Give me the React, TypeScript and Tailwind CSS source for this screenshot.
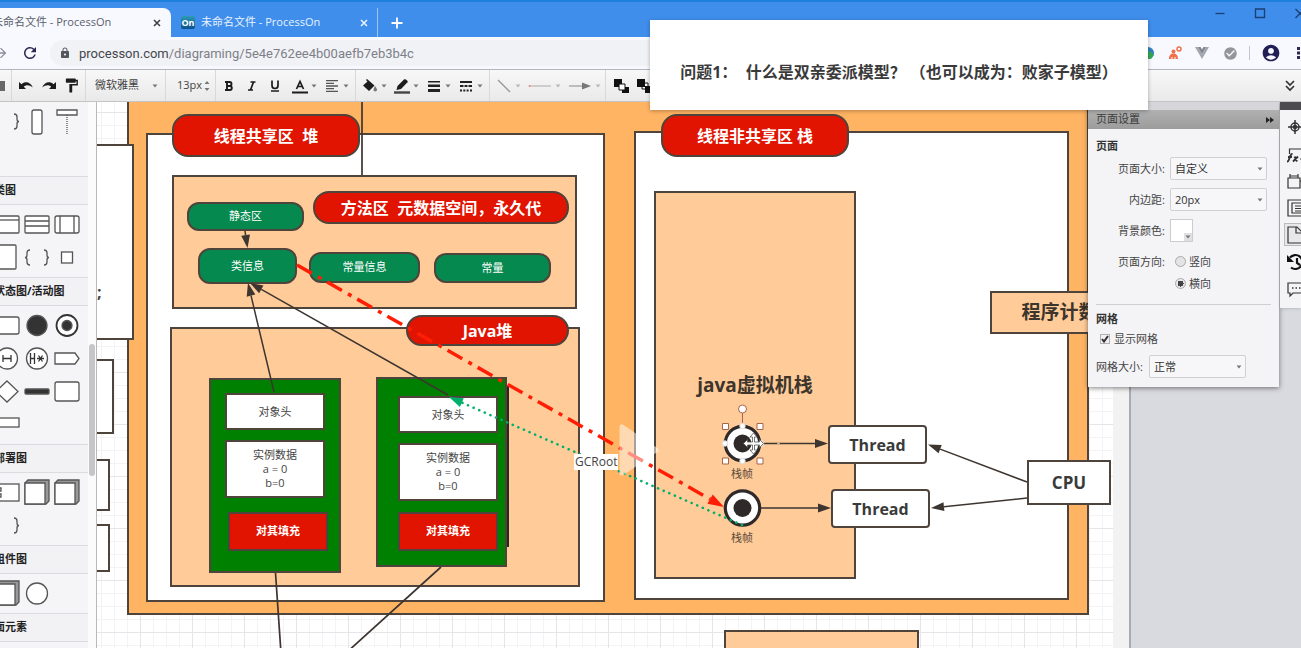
import React from "react";
import {
  MdRefresh, MdLock, MdAccountCircle, MdCheckCircle, MdFormatPaint,
  MdFormatAlignLeft, MdArrowForward,
} from "react-icons/md";

const INK = "#3d3530";
const FONT = "font-['Open_Sans','Noto_Sans_CJK_SC',sans-serif]";

/* ---------- browser chrome ---------- */

function Cross({ className }: { className: string }) {
  return (
    <svg viewBox="0 0 8 8" className={className} fill="none" stroke="currentColor" strokeWidth="1.6">
      <path d="M1 1l6 6M7 1L1 7" />
    </svg>
  );
}

function TabStrip() {
  return (
    <div className="flex h-[37px] shrink-0 items-end border-t-2 border-[#1c80dc] bg-[#3f8eec] text-[11px]">
      <div className="flex h-[29px] w-[171px] items-center justify-between rounded-tr-lg bg-[#f8f9fe] pr-[10px] text-[#5a5e6c]">
        <span className="-ml-[8px] whitespace-nowrap">未命名文件 - ProcessOn</span>
        <button aria-label="关闭标签页"><Cross className="size-2 text-[#3c4048]" /></button>
      </div>
      <div className="flex h-[29px] w-[207px] items-center gap-[6px] border-r border-[#9cc4f5] pl-[10px] pr-[9px] text-[#e8f2ff]">
        <span className="flex h-[13px] w-[14px] items-center justify-center rounded-xs bg-linear-to-b from-[#2f9bb4] to-[#0d4f8c] text-[9px] font-bold leading-none text-white">On</span>
        <span className="flex-1 whitespace-nowrap">未命名文件 - ProcessOn</span>
        <button aria-label="关闭标签页"><Cross className="size-2" /></button>
      </div>
      <button aria-label="新标签页" className="flex h-[29px] w-[38px] items-center justify-center text-white">
        <svg viewBox="0 0 12 12" className="size-3" stroke="currentColor" strokeWidth="1.8"><path d="M6 0.5v11M0.5 6h11" /></svg>
      </button>
      <div className="-mr-[5px] ml-auto flex gap-[28px] self-start pt-[5px] text-[#1d3f70]">
        <button aria-label="最小化">
          <svg viewBox="0 0 12 12" className="size-3" fill="none" stroke="currentColor" strokeWidth="1.3"><path d="M1.500 6.500h9" /></svg>
        </button>
        <button aria-label="最大化">
          <svg viewBox="0 0 12 12" className="size-3" fill="none" stroke="currentColor" strokeWidth="1.3"><path d="M1.500 2h9v8.500h-9z" /></svg>
        </button>
        <button aria-label="关闭">
          <svg viewBox="0 0 12 12" className="size-3" fill="none" stroke="currentColor" strokeWidth="1.3"><path d="M1.500 2l9 9M10.500 2l-9 9" /></svg>
        </button>
      </div>
    </div>
  );
}

function AddressBar() {
  return (
    <div className="flex h-8 shrink-0 items-center bg-[#f8f9fe]">
      <button aria-label="前进" className="-ml-[7px] text-[#8b8d9c]"><MdArrowForward className="size-4" /></button>
      <button aria-label="重新加载" className="ml-[12px] text-[#2b2a55]"><MdRefresh className="size-[18px]" /></button>
      <div className="ml-[11px] flex h-[26px] flex-1 items-center gap-[8px] rounded-full bg-[#f1f2f6] pl-[9px]">
        <MdLock className="size-3 text-[#55575e]" />
        <p className="font-[Roboto,sans-serif] text-[13px] leading-none text-[#7d8088]">
          <span className="text-[#44464c]">processon.com</span>/diagraming/5e4e762ee4b00aefb7eb3b4c
        </p>
      </div>
      <div className="-mr-[5px] flex items-center">
        <svg viewBox="0 0 14 14" className="mr-[13px] size-[14px]">
          <circle cx="7" cy="7" r="6" fill="#2f7fc4" /><path d="M7 4l6 5-3 4H7z" fill="#35a853" />
        </svg>
        <svg viewBox="0 0 14 14" className="mr-[13px] size-[14px]">
          <circle cx="5.500" cy="5.500" r="2" fill="#f0714a" />
          <path d="M1 13c0-4 2-5.500 4.500-5.500S10 9 10 13H7.500v-2h-1v2h-2v-2h-1v2z" fill="#f0714a" />
          <circle cx="11" cy="3" r="2" fill="none" stroke="#f0714a" strokeWidth="1.500" />
        </svg>
        <svg viewBox="0 0 14 12" className="mr-[14px] h-3 w-[14px]">
          <path d="M0 0h3l4 7 4-7h3L7 12z" fill="#a3a6ad" /><path d="M3 0h2.500L7 2.600 8.500 0H11L7 7z" fill="#7f838b" />
        </svg>
        <MdCheckCircle className="size-[15px] text-[#93969c]" />
        <span className="mx-[11px] h-[14px] w-px bg-[#c3c6d0]" />
        <button aria-label="账户"><MdAccountCircle className="size-[20px] text-[#211f56]" /></button>
        <button aria-label="菜单" className="ml-[11px]">
          <svg viewBox="0 0 14 14" className="size-[14px]" fill="#2b2a55"><path d="M5 1h3v3H5zM5 5.500h3v3H5zM5 10h3v3H5z" /></svg>
        </button>
      </div>
    </div>
  );
}

/* ---------- toolbar ---------- */

function Caret({ faint = false }: { faint?: boolean }) {
  return (
    <svg viewBox="0 0 6 4" className={faint ? "h-1 w-[6px] shrink-0 text-[#b8b8b8]" : "h-1 w-[6px] shrink-0 text-[#777]"}>
      <path d="M0.500 0.500h5L3 3.500z" fill="currentColor" />
    </svg>
  );
}

function Divider() {
  return <span className="h-8 w-px shrink-0 bg-[#d9d9d9]" />;
}

function Tool({ label, children }: { label: string; children: React.ReactNode }) {
  return (
    <button aria-label={label} className="flex h-6 w-[23px] shrink-0 items-center justify-center">{children}</button>
  );
}

function DropTool({ label, children, faint }: { label: string; children: React.ReactNode; faint?: boolean }) {
  return (
    <button aria-label={label} className="flex h-6 shrink-0 items-center gap-[3px] pl-[6px] pr-px">
      {children}
      <Caret faint={faint} />
    </button>
  );
}

function Toolbar() {
  return (
    <div className="flex h-[33px] shrink-0 items-center overflow-hidden border-y border-b-[#c4c4c4] border-t-[#b5b6bd] bg-linear-to-b from-[#f8f8f8] to-[#e9e9e9] text-[#1c1c1c]">
      <span className="mr-[6px] h-[10px] w-[5px] shrink-0 bg-[#666]" />
      <Divider />
      <div className="flex pl-[2px] pr-[2px]">
        <Tool label="撤销"><svg viewBox="0 0 14 9" className="h-[9px] w-[14px]"><path d="M0 1v7h7L4.800 5.800C7 3.500 10.500 3.800 13.800 6.500 12 1.500 6.500-.5 2.500 3.200z" fill="currentColor" /></svg></Tool>
        <Tool label="恢复"><svg viewBox="0 0 14 9" className="h-[9px] w-[14px]"><path d="M14 1v7H7l2.200-2.200C7 3.500 3.500 3.800.2 6.500 2 1.500 7.500-.5 11.500 3.200z" fill="currentColor" /></svg></Tool>
        <Tool label="格式刷"><MdFormatPaint className="size-[17px]" /></Tool>
      </div>
      <Divider />
      <label className="flex items-center gap-[12px] pl-[9px] pr-[7px]">
        <select aria-label="字体" className="w-[45px] appearance-none bg-transparent text-[11px] text-[#444] outline-none"><option>微软雅黑</option></select>
        <Caret />
      </label>
      <Divider />
      <label className="flex items-center pl-[11px] pr-[5px]">
        <input aria-label="字号" defaultValue="13px" className="w-[27px] bg-transparent text-[11px] text-[#444] outline-none" />
        <svg viewBox="0 0 6 12" className="h-3 w-[6px]" fill="#777"><path d="M.5 4L3 1l2.500 3zM.5 8h5L3 11z" /></svg>
      </label>
      <Divider />
      <div className="flex pl-px">
        <Tool label="粗体"><svg viewBox="0 0 10 10" className="size-[10px]"><path d="M1 1h4.500a2 2 0 0 1 0 4H3 5.800a2 2 0 0 1 0 4H1M3 .5v9" fill="none" stroke="currentColor" strokeWidth="1.900" /></svg></Tool>
        <Tool label="斜体"><svg viewBox="0 0 10 10" className="size-[10px]"><path d="M3.500 1h5M1 9h5M6.500 1l-3 8" fill="none" stroke="currentColor" strokeWidth="1.700" /></svg></Tool>
        <Tool label="下划线"><svg viewBox="0 0 10 12" className="h-3 w-[10px]"><path d="M2 .5v5a3 3 0 0 0 6 0v-5M1 11h8" fill="none" stroke="currentColor" strokeWidth="1.700" /></svg></Tool>
      </div>
      <DropTool label="字体颜色"><svg viewBox="0 0 16 16" className="size-4"><path d="M4.500 11L8 3.500 11.500 11M5.800 8.500h4.400" fill="none" stroke="currentColor" strokeWidth="1.700" /><path d="M0 13.500h16v2H0z" fill="currentColor" /></svg></DropTool>
      <DropTool label="对齐"><MdFormatAlignLeft className="size-4 text-[#555]" /></DropTool>
      <span className="w-[5px]" />
      <Divider />
      <DropTool label="填充"><svg viewBox="0 0 16 16" className="size-4"><path d="M5 1l7.500 6.500L7 13 1 7.500 5.500 3.500 4 2z" fill="currentColor" /><path d="M13 8c1 1.500 2 2.600 2 3.800s-.8 1.700-1.700 1.700-1.800-.6-1.800-1.700S12.500 9.500 13 8z" fill="#777" /></svg></DropTool>
      <DropTool label="线条颜色"><svg viewBox="0 0 16 16" className="size-4"><path d="M2.500 12l1-4L10 1.500c1-1 4.500 1.500 3.500 2.800L7 11z" fill="currentColor" /><path d="M0 13.300h16v2.400H0z" fill="#444" /></svg></DropTool>
      <DropTool label="线宽"><svg viewBox="0 0 16 12" className="h-3 w-4" fill="#222"><path d="M2 1h12v1.500H2zM2 4.500h12V7H2zM2 9h12v3H2z" /></svg></DropTool>
      <DropTool label="线型"><svg viewBox="0 0 16 12" className="h-3 w-4" fill="#222"><path d="M2 1h12v2H2zM2 5h3.500v2H2zM6.500 5h3v2h-3zM10.500 5H14v2h-3.500zM2 9.500h2v2H2zM5.300 9.500h2v2h-2zM8.600 9.500h2v2h-2zM12 9.500h2v2h-2z" /></svg></DropTool>
      <span className="w-[5px]" />
      <Divider />
      <DropTool label="连线类型" faint><svg viewBox="0 0 16 16" className="size-4" fill="none"><path d="M2 2l12 12" stroke="#999" strokeWidth="1.400" /></svg></DropTool>
      <DropTool label="起点" faint><svg viewBox="0 0 24 8" className="h-2 w-6"><path d="M1 4h22" stroke="#aaa" /><circle cx="1.500" cy="4" r="1" fill="#e88" /></svg></DropTool>
      <DropTool label="终点" faint><svg viewBox="0 0 24 8" className="h-2 w-6"><path d="M1 4h14" stroke="#888" /><path d="M14 .5L23 4l-9 3.500z" fill="#777" /></svg></DropTool>
      <span className="w-[3px]" />
      <Divider />
      <div className="flex pl-[4px]">
        <Tool label="置于顶层"><svg viewBox="0 0 15 14" className="h-[14px] w-[15px]"><path d="M0 0h8v8H0zM8 8h7v6H8z" fill="#111" /><path d="M5 5h6v6H5z" fill="#fff" stroke="#111" /></svg></Tool>
        <Tool label="置于底层"><svg viewBox="0 0 15 14" className="h-[14px] w-[15px]"><path d="M5 4h6v6H5z" fill="#fff" stroke="#111" /><path d="M0 0h8v8H0zM8 7h7v7H8z" fill="#111" /></svg></Tool>
      </div>
      <button aria-label="展开" className="ml-auto mr-[5px]">
        <svg viewBox="0 0 12 12" className="size-3" fill="none" stroke="#333" strokeWidth="1.700"><path d="M2 1l4 4 4-4M2 6l4 4 4-4" /></svg>
      </button>
    </div>
  );
}

/* ---------- shape library ---------- */

function Shape({ children }: { children?: React.ReactNode }) {
  return (
    <svg viewBox="0 0 30 33" className="h-[33px] w-[30px]" fill="#fff" stroke="#555" strokeWidth="1.300">{children}</svg>
  );
}

const brace = <g fill="none"><path d="M8 9q-3 0-3 3v2q0 2.500-2 2.500 2 0 2 2.500v2q0 3 3 3M22 9q3 0 3 3v2q0 2.500 2 2.500-2 0-2 2.500v2q0 3-3 3" /></g>;
const cube = <g><path d="M3 7l3-3h21v21l-3 3H3z" fill="#999" /><path d="M3 7h20v21H3z" /></g>;

function Title({ children }: { children: React.ReactNode }) {
  return (
    <h2 className="flex h-[29px] items-center whitespace-nowrap border-y border-[#dcdce0] bg-[#f2f2f5] text-[11px] font-bold text-[#222]">
      <span className="-ml-[6px]">{children}</span>
    </h2>
  );
}

function Shapes({ children, tail = false }: { children: React.ReactNode; tail?: boolean }) {
  return (
    <div className={tail ? "-ml-2 grid grid-cols-[30px_30px_30px] pb-[38px] pt-[3px]" : "-ml-2 grid grid-cols-[30px_30px_30px] py-[3px]"}>
      {children}
    </div>
  );
}

function Library() {
  return (
    <aside className="flex w-[97px] shrink-0 overflow-hidden border-r border-[#b9b9bd] bg-[#f5f5f8]">
      <div className="w-[88px] shrink-0 overflow-hidden">
        <Shapes tail>
          <Shape>{brace}</Shape>
          <Shape><rect x="10" y="5" width="10" height="24" rx="2" /></Shape>
          <Shape><path d="M5 5h20v5H5z" /><path d="M15 10v19" strokeDasharray="1 1" /></Shape>
        </Shapes>
        <Title>类图</Title>
        <Shapes>
          <Shape><rect x="2" y="8" width="25" height="17" rx="1" /><path d="M2 12h25" /></Shape>
          <Shape><rect x="3" y="8" width="24" height="17" rx="1" /><path d="M3 13h24M3 18h24" /></Shape>
          <Shape><rect x="3" y="8" width="24" height="17" rx="2" /><path d="M8 8v17M22 8v17" /></Shape>
          <Shape><rect x="2" y="4" width="22" height="24" rx="1" /></Shape>
          <Shape>{brace}</Shape>
          <Shape><rect x="9.500" y="11" width="11" height="11" /></Shape>
        </Shapes>
        <Title>状态图/活动图</Title>
        <Shapes>
          <Shape><rect x="2" y="8" width="25" height="17" rx="2" /></Shape>
          <Shape><circle cx="15" cy="16.500" r="10" fill="#333" /></Shape>
          <Shape><circle cx="15" cy="16.500" r="10.500" stroke="#333" strokeWidth="1.800" /><circle cx="15" cy="16.500" r="5" fill="#333" /></Shape>
          <Shape><circle cx="15" cy="16.500" r="10.500" /><path d="M11 13v7M19 13v7M11 16.500h8" stroke="#333" /></Shape>
          <Shape><circle cx="15" cy="16.500" r="10.500" /><path d="M8.500 11v11M12.500 11v11M8.500 16.500h4M15 16.500h7M16.500 13.500l4 6M20.500 13.500l-4 6" stroke="#333" /></Shape>
          <Shape><path d="M3 11h20l4 5.500-4 5.500H3z" /></Shape>
          <Shape><path d="M15 6l11 10.500L15 27 4 16.500z" /></Shape>
          <Shape><rect x="3" y="14" width="24" height="5" rx="1" fill="#333" /></Shape>
          <Shape><rect x="3" y="7" width="24" height="19" rx="2" /></Shape>
          <Shape><rect x="2" y="10" width="25" height="9" /></Shape>
        </Shapes>
        <Title>部署图</Title>
        <Shapes>
          <Shape><rect x="2" y="8" width="25" height="17" /><path d="M5 12h4v3H5zM5 18h4v3H5z" /></Shape>
          <Shape>{cube}</Shape>
          <Shape>{cube}</Shape>
          <Shape>{brace}</Shape>
        </Shapes>
        <Title>组件图</Title>
        <Shapes>
          <Shape>{cube}</Shape>
          <Shape><circle cx="15" cy="16.500" r="10.500" /></Shape>
        </Shapes>
        <Title>面元素</Title>
      </div>
      <div className="flex-1 bg-[#fbfbfc] pt-[242px]">
        <div className="ml-px h-[132px] w-[6px] rounded-full bg-[#c6c6c8]" />
      </div>
    </aside>
  );
}

/* ---------- diagram ---------- */

const SCROLL = { x: 97, y: 102 };

type Kind = "frame" | "area" | "white" | "red" | "green" | "object" | "fill" | "card" | "thread" | "cpu" | "note" | "shadow";
type NodeSpec = { kind: Kind; box: [number, number, number, number]; text?: string };

const KINDS: Record<Kind, string> = {
  frame: "border-2 bg-[#ffb464]",
  white: "border-2 bg-white",
  area: "border-2 bg-[#ffcc99] text-[19px] font-bold text-[#3d342c]",
  note: "border-2 bg-[#ffcc99] text-[19px] font-bold text-[#3d342c]",
  red: "rounded-2xl border-2 bg-[#e01400] text-base font-bold text-white",
  green: "rounded-xl border-2 bg-[#05894f] text-[11px] text-white",
  object: "border-2 bg-[#008000]",
  shadow: "bg-[#2c2620]",
  card: "border-2 bg-white text-[11px] leading-[14px] text-[#444]",
  fill: "border-2 bg-[#e01400] text-[11px] font-bold text-white",
  thread: "rounded-sm border-2 bg-white text-base font-bold text-[#3a3a3a]",
  cpu: "border-2 bg-white text-[17px] font-bold text-[#3a3a3a]",
};

/* box = left, top, right, bottom on the drawing */
const NODES: NodeSpec[] = [
  { kind: "frame", box: [127, 80, 1089, 615] },
  { kind: "white", box: [60, 144, 134, 340] },
  { kind: "white", box: [60, 359, 114, 434] },
  { kind: "white", box: [60, 459, 110, 511] },
  { kind: "white", box: [60, 524, 110, 572] },
  { kind: "white", box: [146, 133, 605, 602] },
  { kind: "white", box: [634, 131, 1069, 600] },
  { kind: "area", box: [172, 175, 577, 309] },
  { kind: "area", box: [170, 327, 580, 587] },
  { kind: "area", box: [654, 191, 856, 579], text: "java虚拟机栈" },
  { kind: "red", box: [172, 114, 360, 157], text: "线程共享区  堆" },
  { kind: "red", box: [661, 114, 849, 157], text: "线程非共享区 栈" },
  { kind: "red", box: [313, 191, 569, 224], text: "方法区  元数据空间，永久代" },
  { kind: "red", box: [406, 315, 569, 346], text: "Java堆" },
  { kind: "green", box: [187, 202, 304, 231], text: "静态区" },
  { kind: "green", box: [198, 248, 297, 284], text: "类信息" },
  { kind: "green", box: [309, 252, 420, 283], text: "常量信息" },
  { kind: "green", box: [434, 253, 551, 283], text: "常量" },
  { kind: "shadow", box: [505, 386, 509, 547] },
  { kind: "object", box: [209, 378, 341, 573] },
  { kind: "object", box: [376, 377, 507, 567] },
  { kind: "card", box: [225, 393, 325, 430], text: "对象头" },
  { kind: "card", box: [225, 440, 325, 498], text: "实例数据\na = 0\nb=0" },
  { kind: "fill", box: [228, 512, 328, 551], text: "对其填充" },
  { kind: "card", box: [398, 396, 498, 433], text: "对象头" },
  { kind: "card", box: [398, 443, 498, 501], text: "实例数据\na = 0\nb=0" },
  { kind: "fill", box: [398, 512, 498, 551], text: "对其填充" },
  { kind: "note", box: [990, 291, 1129, 334], text: "程序计数" },
  { kind: "note", box: [724, 630, 919, 700] },
  { kind: "thread", box: [828, 425, 927, 464], text: "Thread" },
  { kind: "thread", box: [831, 489, 930, 528], text: "Thread" },
  { kind: "cpu", box: [1027, 460, 1111, 505], text: "CPU" },
];

function DiagramNode({ kind, box: [l, t, r, b], text }: NodeSpec) {
  return (
    <div
      className={`absolute flex items-center justify-center whitespace-pre border-[#4e443c] text-center ${KINDS[kind]}`}
      style={{ left: l - SCROLL.x, top: t - SCROLL.y, width: r - l, height: b - t }}
    >
      {text}
    </div>
  );
}

type ArrowProps = { from: [number, number]; to: [number, number]; color?: string; width?: number; dash?: string; cap?: "round" | "butt"; head?: number };

function Arrow({ from, to, color = INK, width = 1.5, dash, cap = "butt", head = 13 }: ArrowProps) {
  const len = Math.hypot(to[0] - from[0], to[1] - from[1]);
  const ux = (to[0] - from[0]) / len;
  const uy = (to[1] - from[1]) / len;
  const bx = to[0] - ux * head;
  const by = to[1] - uy * head;
  const half = head * 0.34;
  return (
    <g>
      <line x1={from[0]} y1={from[1]} x2={bx} y2={by} stroke={color} strokeWidth={width} strokeDasharray={dash} strokeLinecap={cap} />
      <polygon points={`${to[0]},${to[1]} ${bx - uy * half},${by + ux * half} ${bx + uy * half},${by - ux * half}`} fill={color} />
    </g>
  );
}

function State({ cx, cy }: { cx: number; cy: number }) {
  return (
    <g>
      <circle cx={cx} cy={cy} r="17.200" fill="#fff" stroke="#2f2a29" strokeWidth="3.200" />
      <circle cx={cx} cy={cy} r="9" fill="#2f2a29" />
    </g>
  );
}

function Links() {
  return (
    <svg className="absolute inset-0 size-full">
      <g transform={`translate(${-SCROLL.x} ${-SCROLL.y})`}>
        <path d="M362 102v73M275.500 573l5.500 80M441 567l-95 86" stroke={INK} strokeWidth="1.700" fill="none" />
        <Arrow from={[245, 231]} to={[247.5, 248]} />
        <Arrow from={[274, 392]} to={[248, 283]} />
        <Arrow from={[448, 395]} to={[250, 283]} />
        <State cx={742.5} cy={443.5} />
        <State cx={742.5} cy={508} />
        <Arrow from={[761, 443.5]} to={[828, 443.5]} />
        <Arrow from={[761, 508]} to={[831, 508]} />
        <Arrow from={[1027, 482]} to={[928, 444.5]} />
        <Arrow from={[1027, 498]} to={[931, 508]} />
        <Arrow from={[297, 265]} to={[724, 507]} color="#ff1e05" width={3.5} dash="17 7 4 6.600" head={16} />
        <Arrow from={[742, 525]} to={[449, 397]} color="#00b06a" width={2.6} dash="0.100 6" cap="round" head={14} />
        <g stroke="#a8634a" fill="#fff">
          <path d="M742.500 413v10" />
          <circle cx="742.500" cy="409" r="4" />
          <path d="M722.500 423.500h6v6h-6zM757 423.500h6v6h-6zM722.500 458h6v6h-6zM757 458h6v6h-6z" />
          <g stroke="#ddd"><circle cx="742.500" cy="426" r="2.700" /><circle cx="725" cy="443.500" r="2.700" /><circle cx="761" cy="443.500" r="2.700" /><circle cx="742.500" cy="461" r="2.700" /></g>
          <circle cx="778.500" cy="443.500" r="1.500" fill="#d9a98a" stroke="none" />
        </g>
        <g fill="#fff" stroke="#555" strokeWidth="0.800">
          <path d="M753.500 433l3.500 4h-2.500v5h5v-2.500l4 4-4 4v-2.500h-5v5h2.500l-3.500 4-3.500-4h2.500v-5h-5v2.500l-4-4 4-4v2.500h5v-5h-2.500z" />
        </g>
      </g>
    </svg>
  );
}

function Canvas() {
  return (
    <main className="relative flex min-w-0 flex-1 overflow-hidden bg-[#d9d9e0]">
      <div className="w-[1034px] shrink-0 border-r-2 border-[#a9a9b0] bg-[#f2f2f3] pr-[16px]">
        <div className="h-full bg-white bg-[linear-gradient(to_right,#e6e6ea_1px,transparent_1px),linear-gradient(to_bottom,#e6e6ea_1px,transparent_1px),linear-gradient(to_right,#f3f3f6_1px,transparent_1px),linear-gradient(to_bottom,#f3f3f6_1px,transparent_1px)] bg-[size:52px_52px,52px_52px,13px_13px,13px_13px] bg-[position:43px_10px]" />
      </div>
      {NODES.map((n, i) => <DiagramNode key={i} {...n} />)}
      <span className="absolute left-0 top-[178px] text-base font-bold text-[#444]">;</span>
      <Links />
      <span className="absolute left-[634px] top-[364px] text-[11px] leading-[16px] text-[#5b4a3c]">栈帧</span>
      <span className="absolute left-[634px] top-[428px] text-[11px] leading-[16px] text-[#5b4a3c]">栈帧</span>
      <span className="absolute left-[477px] top-[352px] bg-white px-px text-[12px] leading-[16px] text-[#444]">GCRoot</span>
      <svg viewBox="0 0 42 54" className="absolute left-[521px] top-[321px] h-[54px] w-[42px]">
        <path d="M4 4v46L38 27z" fill="#fff" stroke="#fff" strokeWidth="5" strokeLinejoin="round" opacity="0.500" />
      </svg>
      <PageSettings />
      <Dock />
    </main>
  );
}

/* ---------- right side ---------- */

function Picker({ id, value }: { id: string; value: string }) {
  return (
    <span className="flex h-[23px] w-[97px] items-center rounded-xs border border-[#d0d0d3] bg-[#f7f7f9] pl-[4px] pr-[3px]">
      <select id={id} className="min-w-0 flex-1 appearance-none bg-transparent text-[11px] text-[#333] outline-none"><option>{value}</option></select>
      <Caret />
    </span>
  );
}

const rowLabel = "w-[69px] text-right";

function PageSettings() {
  return (
    <section className="absolute right-[22px] top-0 w-[191px] bg-[#d6d6da] pt-2 shadow-[0_1px_5px_rgba(0,0,0,0.5)]">
      <header className="flex h-[19px] items-center justify-between bg-linear-to-b from-[#b0b0b0] to-[#9c9c9c] pl-[8px] pr-[5px] text-[11px] text-[#3a3a3a]">
        页面设置
        <button aria-label="收起"><svg viewBox="0 0 8 8" className="size-2" fill="#222"><path d="M0 1l4 3-4 3zM4 1l4 3-4 3z" /></svg></button>
      </header>
      <form className="flex h-[258px] flex-col bg-[#f4f4f7] px-[8px] pt-[8px] text-[11px] leading-[17px] text-[#444]">
        <h3 className="mb-[3px] font-bold text-[#333]">页面</h3>
        <div className="flex flex-col gap-[8px]">
          <div className="flex items-center gap-[5px]"><label htmlFor="page-size" className={rowLabel}>页面大小:</label><Picker id="page-size" value="自定义" /></div>
          <div className="flex items-center gap-[5px]"><label htmlFor="padding" className={rowLabel}>内边距:</label><Picker id="padding" value="20px" /></div>
          <div className="flex items-center gap-[5px]">
            <span className={rowLabel}>背景颜色:</span>
            <button type="button" aria-label="背景颜色" className="flex size-[23px] items-end justify-end border border-[#ccc] bg-white">
              <span className="flex size-2 items-center justify-center bg-[#e0e0e2]"><Caret /></span>
            </button>
          </div>
        </div>
        <div className="mt-[11px] flex gap-[10px]">
          <span className={rowLabel}>页面方向:</span>
          <div className="flex flex-col gap-[5px]">
            <label className="flex items-center gap-[3px]"><input type="radio" name="dir" className="size-[11px] appearance-none rounded-full border border-[#aaa] bg-[#e4e4e6]" />竖向</label>
            <label className="flex items-center gap-[3px]"><input type="radio" name="dir" defaultChecked className="size-[11px] appearance-none rounded-full border border-[#aaa] bg-[radial-gradient(#444_0_3px,#e8e8ea_3px)]" />横向</label>
          </div>
        </div>
        <hr className="mt-[12px] border-[#cfcfd2]" />
        <h3 className="mt-[5px] font-bold text-[#333]">网格</h3>
        <label className="mt-[3px] flex items-center gap-[4px] pl-[4px]">
          <span className="relative flex">
            <input type="checkbox" defaultChecked className="size-[10px] appearance-none border border-[#b0b0b4] bg-[#f0f0f2]" />
            <svg viewBox="0 0 10 10" className="absolute inset-0 size-[10px]" fill="none" stroke="#333" strokeWidth="2"><path d="M2 5l2 2.500L8 2" /></svg>
          </span>
          显示网格
        </label>
        <div className="mt-[8px] flex items-center gap-[6px]"><label htmlFor="grid-size">网格大小:</label><Picker id="grid-size" value="正常" /></div>
      </form>
    </section>
  );
}

function DockButton({ label, active, children }: { label: string; active?: boolean; children: React.ReactNode }) {
  return (
    <button aria-label={label} className={active ? "flex h-[23px] items-center border border-r-0 border-[#bbb] bg-[#e8e8ea] pl-[2px]" : "flex h-[23px] items-center pl-[3px]"}>
      <svg viewBox="0 0 18 18" className="size-[18px] shrink-0" fill="none" stroke="#333" strokeWidth="1.500">{children}</svg>
    </button>
  );
}

function Dock() {
  return (
    <nav className="absolute right-0 top-0 flex w-[21px] flex-col overflow-hidden bg-[#f4f4f7] shadow-sm">
      <span className="h-2 bg-[#4c4c50]" />
      <div className="flex flex-col gap-[4px] pb-[8px] pl-[4px] pt-[5px]">
        <DockButton label="导航"><circle cx="8" cy="9" r="4" /><circle cx="8" cy="9" r="1.500" fill="#333" /><path d="M8 2v14M1 9h14" /></DockButton>
        <DockButton label="图形"><path d="M2.500 9V4H17v10h-4" strokeWidth="1.200" /><path d="M0 16.500c3 .5 2-8 5.500-7.500M1 12h4M6 16.500l5-5M7.500 11.500l2.500 5" strokeWidth="1.900" /></DockButton>
        <DockButton label="度量"><path d="M1 6h12v10H1zM3 2v4M11 2v4M3 4h8M13 9h4v7" strokeWidth="1.200" /></DockButton>
        <DockButton label="数据"><path d="M1 1h16v16H1z" strokeWidth="1.200" /><path d="M14 4H5v10h9M8 7h9M8 9.500h9M8 12h9" strokeWidth="1.200" /></DockButton>
        <DockButton label="页面" active><path d="M1 1h9l5 5v11H1zM9 1v6h6" strokeWidth="1.200" /></DockButton>
        <DockButton label="历史"><path d="M3 4.500A7 7 0 1 1 4 14.500M10 5v5l3 2" stroke="#111" strokeWidth="2.200" /><path d="M0 2v7h7z" fill="#111" stroke="none" /></DockButton>
        <DockButton label="评论"><path d="M1 3h16v10H6l-3 3v-3H1z" strokeWidth="1.200" /><path d="M5 8h1.500M8.500 8H10M12 8h1.500" /></DockButton>
      </div>
    </nav>
  );
}

export default function App() {
  return (
    <div className={`relative flex h-screen flex-col overflow-hidden ${FONT}`}>
      <TabStrip />
      <AddressBar />
      <Toolbar />
      <div className="flex min-h-0 flex-1">
        <Library />
        <Canvas />
      </div>
      <div className="absolute right-[153px] top-5 flex h-[90px] w-[498px] items-center justify-center whitespace-pre bg-white pt-[13px] text-base font-bold text-[#3a3a3a] shadow-[0_1px_4px_rgba(0,0,0,0.3)]">
        问题1：  什么是双亲委派模型？ （也可以成为：败家子模型）
      </div>
    </div>
  );
}
